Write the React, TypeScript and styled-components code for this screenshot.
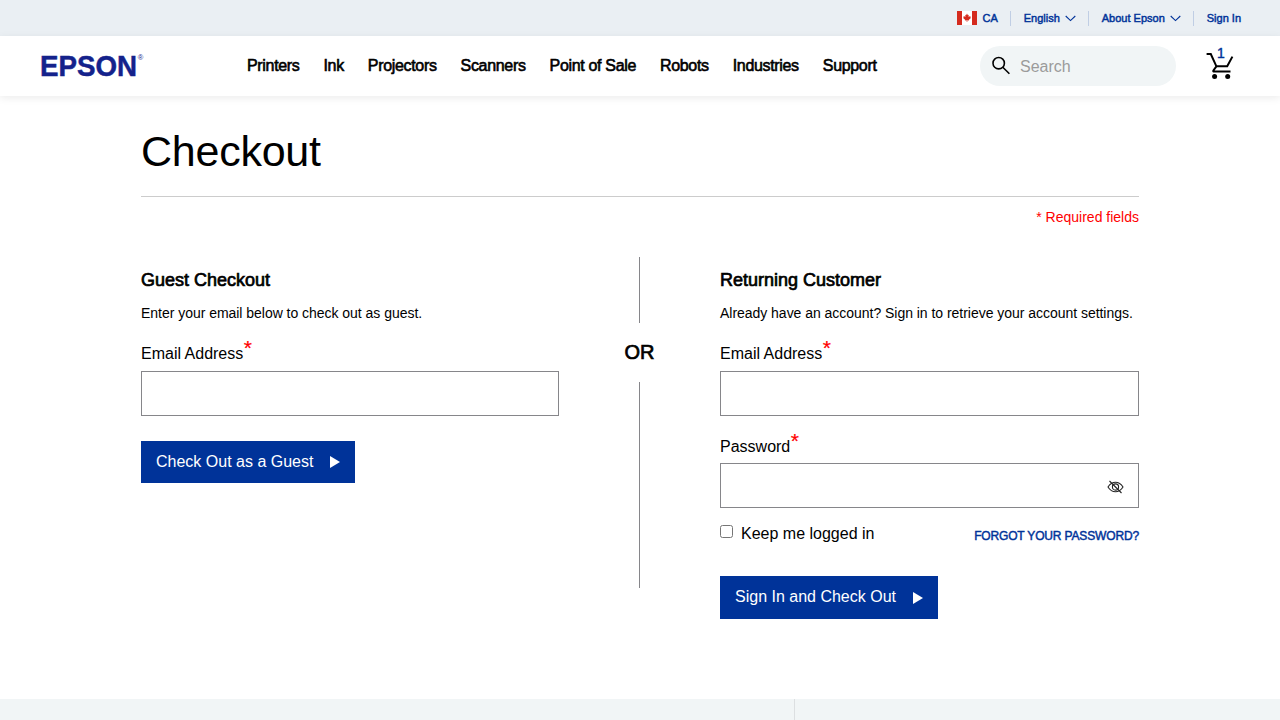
import React from "react";
import styled, { createGlobalStyle } from "styled-components";

const BLUE = "#003399";

const GlobalStyle = createGlobalStyle`
  * { box-sizing: border-box; }
  body {
    margin: 0;
    background: #fff;
    color: #000;
    font-family: "Liberation Sans", Arial, sans-serif;
    font-size: 16px;
  }
  svg { display: block; flex: none; }
  a { color: inherit; text-decoration: none; }
`;

const Page = styled.div`
  height: 720px;
  overflow: hidden;
  display: flex;
  flex-direction: column;
`;

const UtilityBar = styled.div`
  height: 36px;
  flex: none;
  background: #eaeff3;
  display: flex;
  justify-content: flex-end;
  align-items: center;
  padding-right: 39px;
  color: ${BLUE};
  font-size: 11px;
  line-height: 14px;
  -webkit-text-stroke: 0.45px currentColor;
`;

const UtilityItem = styled.a`
  display: flex;
  align-items: center;
  gap: 5px;
`;

const UtilityDivider = styled.span`
  width: 1px;
  height: 15px;
  margin: 0 12.8px 0 12.2px;
  background: #c0cee4;
`;

const Header = styled.header`
  height: 60px;
  flex: none;
  display: flex;
  align-items: center;
  padding: 0 45px 0 40px;
  background: #fff;
  box-shadow: 0 2px 8px rgba(0, 0, 0, 0.08);
`;

const Nav = styled.nav`
  display: flex;
  gap: 24px;
  margin-left: 101px;
  letter-spacing: -0.33px;
  line-height: 20px;
  white-space: nowrap;
  -webkit-text-stroke: 0.6px currentColor;
`;

const SearchBox = styled.label`
  width: 196px;
  height: 40px;
  margin-left: auto;
  padding-left: 12px;
  border-radius: 20px;
  background: #f1f5f6;
  display: flex;
  align-items: center;
  gap: 9px;
`;

const SearchInput = styled.input`
  width: 140px;
  border: 0;
  padding: 0;
  outline: 0;
  background: transparent;
  font: inherit;
  line-height: 20px;
  margin-top: 2px;
  &::placeholder { color: #9b9b9b; opacity: 1; }
`;

const Cart = styled.a`
  position: relative;
  margin-left: 30px;
`;

const CartCount = styled.span`
  position: absolute;
  left: 11px;
  top: -7px;
  color: ${BLUE};
  font-size: 14px;
  line-height: 16px;
  -webkit-text-stroke: 0.4px currentColor;
`;

const Main = styled.main`
  flex: none;
  height: 603px;
  padding: 0 141px;
`;

const TitleRow = styled.div`
  height: 101px;
  padding-top: 31px;
  border-bottom: 1px solid #ccc;
`;

const Title = styled.h1`
  margin: 0;
  font-weight: 400;
  font-size: 43px;
  letter-spacing: -0.25px;
  line-height: 48px;
`;

const RequiredNote = styled.p`
  margin: 12px 0 0;
  text-align: right;
  color: #f00;
  font-size: 14px;
  line-height: 16px;
`;

const Columns = styled.div`
  display: grid;
  grid-template-columns: 418px 161px 419px;
  margin-top: 32px;
`;

const Panel = styled.form`
  display: flex;
  flex-direction: column;
  align-items: stretch;
  padding-top: 12px;
`;

const PanelTitle = styled.h2`
  margin: 0;
  font-weight: 400;
  font-size: 18px;
  line-height: 22px;
  -webkit-text-stroke: 0.7px currentColor;
`;

const PanelText = styled.p`
  margin: 13px 0 0;
  font-size: 14px;
  letter-spacing: -0.03px;
  line-height: 18px;
  white-space: nowrap;
`;

const FieldLabel = styled.label<{ $top: number; $bottom: number }>`
  display: flex;
  align-items: flex-start;
  height: 20px;
  margin: ${(p) => p.$top}px 0 ${(p) => p.$bottom}px;
  line-height: 20px;
`;

const Star = styled.span`
  color: #f00;
  font-size: 21px;
  line-height: 20px;
  margin: -6px 0 0 0.5px;
  -webkit-text-stroke: 0.2px currentColor;
`;

const FieldBox = styled.div`
  height: 45px;
  border: 1px solid #86868a;
  display: flex;
  align-items: center;
  padding-right: 14px;
  & > svg { margin-top: 2px; }
`;

const FieldInput = styled.input`
  flex: 1;
  min-width: 0;
  height: 43px;
  border: 0;
  outline: 0;
  padding: 0 12px;
  background: transparent;
  font: inherit;
`;

const Divider = styled.div`
  display: flex;
  flex-direction: column;
  align-items: center;
`;

const DividerLine = styled.span<{ $height: number }>`
  width: 1px;
  height: ${(p) => p.$height}px;
  background: #86868a;
`;

const DividerText = styled.span`
  height: 59px;
  line-height: 59px;
  font-size: 20px;
  -webkit-text-stroke: 0.7px currentColor;
`;

const Options = styled.div`
  display: flex;
  justify-content: space-between;
  height: 20px;
  margin-top: 16px;
  line-height: 20px;
`;

const Keep = styled.label`
  display: flex;
`;

const Checkbox = styled.input`
  width: 13px;
  height: 13px;
  margin: 1px 8px 0 0;
`;

const Forgot = styled.a`
  color: ${BLUE};
  font-size: 12px;
  letter-spacing: -0.15px;
  margin-top: 2px;
  -webkit-text-stroke: 0.45px currentColor;
`;

const Button = styled.button<{ $width: number; $height: number; $top: number }>`
  width: ${(p) => p.$width}px;
  height: ${(p) => p.$height}px;
  margin-top: ${(p) => p.$top}px;
  padding: 0 15px;
  border: 0;
  background: ${BLUE};
  color: #fff;
  font: inherit;
  line-height: 20px;
  display: flex;
  align-items: center;
  justify-content: space-between;
  white-space: nowrap;
`;

const SignInButton = styled(Button)`
  padding: 0 15px 1px 15px;
  & > svg { margin-top: 2px; }
`;

const Footer = styled.footer`
  flex: 1;
  display: grid;
  grid-template-columns: 795px 1fr;
  background: #f1f5f6;
`;

const FooterCell = styled.div`
  border-right: 1px solid #dcdfe1;
  &:last-child { border: 0; }
`;

const Logo = () => (
  <svg width="106" height="40" viewBox="0 0 106 40" fill="#14228b">
    <text x="0" y="30" fontSize="29.5" fontWeight="700" textLength="97" lengthAdjust="spacingAndGlyphs" stroke="#14228b" strokeWidth="0.5">EPSON</text>
    <text x="97.800" y="14" fontSize="7.500">®</text>
  </svg>
);

const Flag = () => (
  <svg width="20" height="14" viewBox="0 0 20 14">
    <rect width="20" height="14" fill="#fff" />
    <path d="M0 0h5v14H0zM15 0h5v14h-5z" fill="#d52b1e" />
    <path d="M10 2.6l.9 1.6.9-.4-.4 2.2 1-.9.3.6 1.2-.2-.5 1.3.5.3-2 1.6.2.9-1.8-.3v1.6h-.6V9.3l-1.8.3.2-.9-2-1.6.5-.3-.5-1.3 1.2.2.3-.6 1 .9-.4-2.2.9.4z" fill="#d52b1e" />
  </svg>
);

const Chevron = () => (
  <svg width="11" height="7" viewBox="0 0 11 7" fill="none" stroke={BLUE} strokeWidth="1.1">
    <path d="M.7 1l4.8 4.6L10.300 1" />
  </svg>
);

const SearchIcon = () => (
  <svg width="19" height="20" viewBox="0 0 19 20" fill="none" stroke="#000" strokeWidth="1.6">
    <circle cx="6.700" cy="7.200" r="5.700" />
    <path d="M10.800 11.300l6.600 6.500" />
  </svg>
);

const CartIcon = () => (
  <svg width="29" height="28" viewBox="0 0 29 28" fill="none" stroke="#000" strokeWidth="2">
    <path d="M.6 2h4.200l5.600 12.300h10.800L26.400 4.600M10.400 14.300l-3 4.200q-.6 1.100.8 1.100H24.500" />
    <circle cx="8.600" cy="24.600" r="2.500" fill="#000" stroke="none" />
    <circle cx="21.700" cy="24.600" r="2.500" fill="#000" stroke="none" />
  </svg>
);

const EyeOffIcon = () => (
  <svg width="17" height="14" viewBox="0 0 17 14" fill="none" stroke="#222" strokeWidth="1.100">
    <path d="M1 7q3-4.800 7.500-4.800T16 7q-3 4.800-7.500 4.800T1 7z" />
    <circle cx="8.500" cy="7" r="3.100" />
    <path d="M2.500 1l12 12" />
  </svg>
);

const Play = () => (
  <svg width="10" height="12" viewBox="0 0 10 12" fill="#fff">
    <path d="M0 0l10 6-10 6z" />
  </svg>
);

const NAV = ["Printers", "Ink", "Projectors", "Scanners", "Point of Sale", "Robots", "Industries", "Support"];

type FieldProps = { label: string; top: number; bottom?: number; type?: string; children?: React.ReactNode };

const Field = ({ label, top, bottom = 7, type = "text", children }: FieldProps) => (
  <>
    <FieldLabel $top={top} $bottom={bottom}>
      {label}
      <Star>*</Star>
    </FieldLabel>
    <FieldBox>
      <FieldInput type={type} aria-label={label} />
      {children}
    </FieldBox>
  </>
);

export default function App() {
  return (
    <Page>
      <GlobalStyle />
      <UtilityBar>
        <UtilityItem><Flag />CA</UtilityItem>
        <UtilityDivider />
        <UtilityItem>English<Chevron /></UtilityItem>
        <UtilityDivider />
        <UtilityItem>About Epson<Chevron /></UtilityItem>
        <UtilityDivider />
        <UtilityItem>Sign In</UtilityItem>
      </UtilityBar>
      <Header>
        <Logo />
        <Nav>
          {NAV.map((item) => <a key={item}>{item}</a>)}
        </Nav>
        <SearchBox>
          <SearchIcon />
          <SearchInput placeholder="Search" />
        </SearchBox>
        <Cart>
          <CartIcon />
          <CartCount>1</CartCount>
        </Cart>
      </Header>
      <Main>
        <TitleRow><Title>Checkout</Title></TitleRow>
        <RequiredNote>* Required fields</RequiredNote>
        <Columns>
          <Panel>
            <PanelTitle>Guest Checkout</PanelTitle>
            <PanelText>Enter your email below to check out as guest.</PanelText>
            <Field label="Email Address" top={22} />
            <Button type="button" $width={214} $height={42} $top={25}>Check Out as a Guest<Play /></Button>
          </Panel>
          <Divider>
            <DividerLine $height={66} />
            <DividerText>OR</DividerText>
            <DividerLine $height={206} />
          </Divider>
          <Panel>
            <PanelTitle>Returning Customer</PanelTitle>
            <PanelText>Already have an account? Sign in to retrieve your account settings.</PanelText>
            <Field label="Email Address" top={22} />
            <Field label="Password" top={21} bottom={6} type="password"><EyeOffIcon /></Field>
            <Options>
              <Keep><Checkbox type="checkbox" />Keep me logged in</Keep>
              <Forgot>FORGOT YOUR PASSWORD?</Forgot>
            </Options>
            <SignInButton type="button" $width={218} $height={43} $top={32}>Sign In and Check Out<Play /></SignInButton>
          </Panel>
        </Columns>
      </Main>
      <Footer>
        <FooterCell />
        <FooterCell />
      </Footer>
    </Page>
  );
}
